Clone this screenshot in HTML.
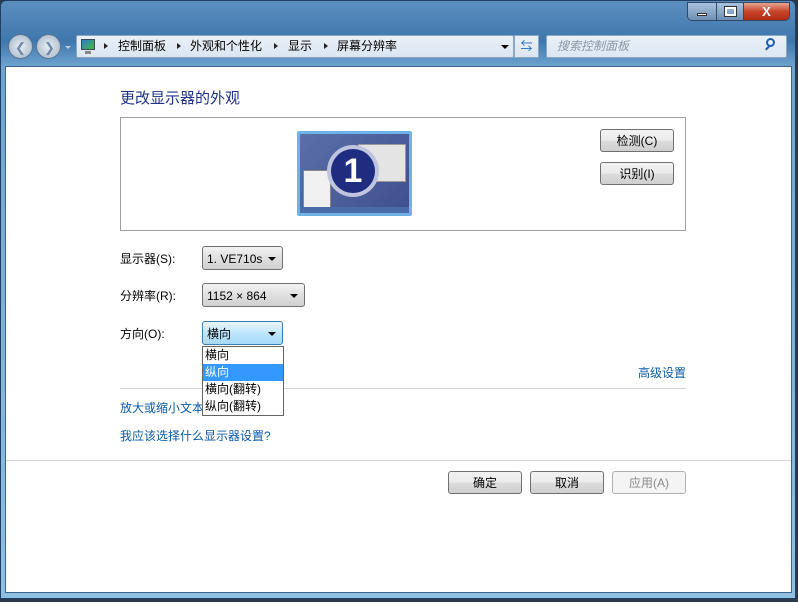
<!DOCTYPE html><html><head><meta charset="utf-8"><style>
*{margin:0;padding:0;box-sizing:border-box}
body{width:798px;height:602px;overflow:hidden;background:#2a3a4a;font-family:"Liberation Sans","Noto Sans CJK SC",sans-serif;font-size:12px;color:#000;position:relative}
.frame{position:absolute;left:0;top:0;width:796px;height:599px;background:linear-gradient(180deg,#5b8fbf 0,#3f77ad 40px,#6fa4cf 66px,#8fc0e0 100%);border:1px solid #1f3f63;border-radius:6px 6px 0 0}
.content{position:absolute;left:5px;top:66px;width:787px;height:527px;background:#fff;border:1px solid #3c6288}
.abs{position:absolute}
.btn{position:absolute;border:1px solid #707070;border-radius:3px;background:linear-gradient(#f2f2f2 0,#ebebeb 50%,#dddddd 51%,#cfcfcf 100%);font-size:12px;display:flex;align-items:center;justify-content:center}
.link{color:#0b5aa8;position:absolute;font-size:12px}
.combo{position:absolute;border:1px solid #707070;border-radius:3px;background:linear-gradient(#f2f2f2,#e0e0e0 50%,#d0d0d0);font-size:12px;display:flex;align-items:center;padding-left:4px;padding-top:1px}
.combo::after{content:"";position:absolute;right:6px;top:10px;border:4px solid transparent;border-top:4px solid #000;border-bottom:0}
.dd div{height:17px;line-height:17px;padding-left:2px}
.bc{position:absolute;top:39px;font-size:12px;line-height:15px}
.ar{position:absolute;top:43px;border:3.5px solid transparent;border-left:4px solid #222;border-right:0}
</style></head><body>
<div class="frame"></div>
<div class="abs" style="left:687px;top:2px;width:103px;height:19px;border:1px solid #324a66;border-radius:0 0 5px 5px;overflow:hidden;display:flex">
<div style="width:29px;background:linear-gradient(#a9c2dd,#6e8fb4);border-right:1px solid #324a66;position:relative"><div class="abs" style="left:9px;top:10px;width:10px;height:3px;background:#fff;border:1px solid #333"></div></div>
<div style="width:27px;background:linear-gradient(#a9c2dd,#6e8fb4);border-right:1px solid #324a66;position:relative"><div class="abs" style="left:8px;top:4px;width:11px;height:9px;border:2px solid #fff;outline:1px solid #333"></div></div>
<div style="flex:1;background:linear-gradient(#e8a593,#c8452c 50%,#b02a12);color:#fff;font-weight:bold;text-align:center;font-size:13px;line-height:17px">X</div></div>
<div class="abs" style="left:8px;top:34px;width:25px;height:25px;border-radius:50%;background:radial-gradient(#e8eef4,#9fb2c6);border:1px solid #5a7590"></div>
<div class="abs" style="left:36px;top:34px;width:25px;height:25px;border-radius:50%;background:radial-gradient(#e8eef4,#9fb2c6);border:1px solid #5a7590"></div>
<div class="abs" style="left:15px;top:40px;color:#6e8aa6;font-size:13px">❮</div><div class="abs" style="left:44px;top:40px;color:#6e8aa6;font-size:13px">❯</div>
<div class="abs" style="left:65px;top:46px;border:3px solid transparent;border-top:3px solid #b8cde0"></div>
<div class="abs" style="left:76px;top:35px;width:438px;height:23px;background:linear-gradient(#e9f0f7,#dbe6f1);border:1px solid #8ea7c0;border-radius:2px"></div>
<div class="abs" style="left:81px;top:39px;width:14px;height:11px;background:linear-gradient(135deg,#2a7cd0,#45b83d);border:1px solid #3a4a5a"></div>
<div class="abs" style="left:85px;top:51px;width:6px;height:3px;background:#888"></div>
<div class="ar" style="left:104px"></div><div class="bc" style="left:118px">控制面板</div>
<div class="ar" style="left:177px"></div><div class="bc" style="left:190px">外观和个性化</div>
<div class="ar" style="left:274px"></div><div class="bc" style="left:288px">显示</div>
<div class="ar" style="left:324px"></div><div class="bc" style="left:337px">屏幕分辨率</div>
<div class="abs" style="left:501px;top:45px;border:4px solid transparent;border-top:4px solid #000"></div>
<div class="abs" style="left:514px;top:35px;width:25px;height:23px;background:linear-gradient(#e9f0f7,#dbe6f1);border:1px solid #8ea7c0;color:#2a6bb8;text-align:center;font-size:12px;line-height:20px">⇆</div>
<div class="abs" style="left:546px;top:35px;width:241px;height:23px;background:linear-gradient(#e9f0f7,#dde7f1);border:1px solid #8ea7c0;border-radius:2px;color:#8a96a2;font-style:italic;padding-left:10px;line-height:21px">搜索控制面板</div>
<div class="abs" style="left:766px;top:38px;width:9px;height:9px;border:2px solid #1f5fae;border-radius:50%"></div>
<div class="abs" style="left:765px;top:47px;width:5px;height:2px;background:#1f5fae;transform:rotate(-45deg)"></div>
<div class="content"></div>
<div class="abs" style="left:120px;top:87px;font-size:15px;color:#1e3287">更改显示器的外观</div>
<div class="abs" style="left:120px;top:117px;width:566px;height:114px;border:1px solid #a0a0a0"></div>
<div class="abs" style="left:297px;top:131px;width:115px;height:85px;border:3px solid #6fb2e6;background:linear-gradient(135deg,#5a6fa8,#3e4f8e);border-radius:2px"></div>
<div class="abs" style="left:358px;top:144px;width:48px;height:38px;background:#e4e4e4;border:1px solid #999"></div>
<div class="abs" style="left:303px;top:170px;width:28px;height:40px;background:#f0f0f0;border:1px solid #888"></div>
<div class="abs" style="left:300px;top:207px;width:109px;height:6px;background:#4a6aa8"></div>
<div class="abs" style="left:327px;top:145px;width:52px;height:52px;border-radius:50%;background:#1f2d80;border:4px solid rgba(220,225,240,.85);color:#fff;font-size:34px;font-weight:bold;text-align:center;line-height:44px">1</div>
<div class="btn" style="left:600px;top:129px;width:74px;height:23px">检测(C)</div>
<div class="btn" style="left:600px;top:162px;width:74px;height:23px">识别(I)</div>
<div class="abs" style="left:120px;top:250px">显示器(S):</div>
<div class="combo" style="left:202px;top:246px;width:81px;height:24px">1. VE710s</div>
<div class="abs" style="left:120px;top:287px">分辨率(R):</div>
<div class="combo" style="left:202px;top:283px;width:103px;height:24px">1152 × 864</div>
<div class="abs" style="left:120px;top:325px">方向(O):</div>
<div class="combo" style="left:202px;top:321px;width:81px;height:24px;border-color:#3c7fb1;background:linear-gradient(#eaf6fd,#bee6fd 50%,#a7d9f5)">横向</div>
<div class="abs" style="left:120px;top:388px;width:566px;height:1px;background:#d5d5d5"></div>
<div class="link" style="left:638px;top:364px">高级设置</div>
<div class="link" style="left:120px;top:399px">放大或缩小文本</div>
<div class="link" style="left:120px;top:427px">我应该选择什么显示器设置?</div>
<div class="abs dd" style="left:202px;top:346px;width:82px;height:70px;background:#fff;border:1px solid #646464;font-size:12px">
<div>横向</div><div style="background:#3399ff;color:#fff">纵向</div><div>横向(翻转)</div><div>纵向(翻转)</div></div>
<div class="abs" style="left:6px;top:460px;width:785px;height:1px;background:#d5d5d5"></div>
<div class="btn" style="left:448px;top:471px;width:74px;height:23px">确定</div>
<div class="btn" style="left:530px;top:471px;width:74px;height:23px">取消</div>
<div class="btn" style="left:612px;top:471px;width:74px;height:23px;background:#f4f4f4;border-color:#adb2b5;color:#8b8b8b">应用(A)</div>
</body></html>
